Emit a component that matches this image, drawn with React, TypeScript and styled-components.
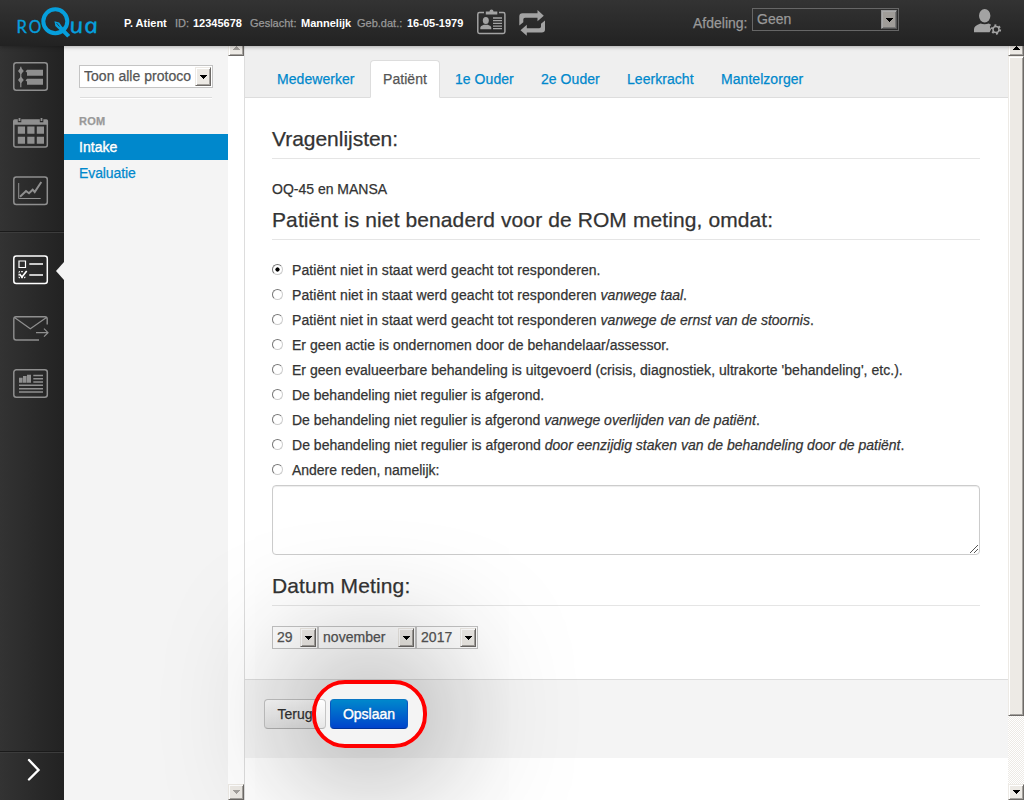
import React from 'react';
import styled, { createGlobalStyle, css } from 'styled-components';

const Global = createGlobalStyle`
  * { box-sizing: border-box; }
  html, body { margin: 0; padding: 0; overflow: hidden; }
  body {
    font: 14px/20px "Liberation Sans", Arial, sans-serif;
    color: #333;
    background: #fff;
    -webkit-text-stroke-width: 0.25px;
  }
  svg { display: block; flex: none; }
`;

const Page = styled.div`
  display: flex;
  flex-direction: column;
  width: 1024px;
  height: 800px;
  overflow: hidden;
`;

const Header = styled.header`
  position: relative;
  z-index: 2;
  flex: none;
  display: flex;
  align-items: center;
  height: 46px;
  background: linear-gradient(#333, #222);
  box-shadow: 0 1px 4px rgba(0, 0, 0, 0.3);
`;

const LogoLink = styled.a`
  width: 124px;
  padding-left: 16px;
`;

const Patient = styled.div`
  display: flex;
  width: 352px;
  font-size: 11px;
  color: #999;
  white-space: nowrap;
`;

const Fact = styled.span<{ $w: number }>`
  flex: none;
  width: ${(p) => p.$w}px;
`;

const Strong = styled(Fact)`
  font-weight: bold;
  color: #fff;
  -webkit-text-stroke-width: 0;
`;

const HeaderTools = styled.div`
  display: flex;
  width: 217px;
  gap: 11px;
  padding-bottom: 1px;
`;

const Department = styled.label`
  display: flex;
  width: 280px;
  padding-bottom: 5px;
  color: #999;
`;

const DepartmentLabel = styled.span`
  width: 59px;
  padding-top: 5px;
`;

const UserMenu = styled.a`
  padding-bottom: 2px;
`;

const Body = styled.div`
  flex: 1;
  display: flex;
  min-height: 0;
`;

const Rail = styled.nav`
  flex: none;
  display: flex;
  flex-direction: column;
  width: 64px;
  background: linear-gradient(90deg, #333, #222);
`;

const RailGroup = styled.div<{ $height: number; $top: number; $last?: boolean }>`
  height: ${(p) => p.$height}px;
  padding: ${(p) => p.$top}px 0 0 13px;
  ${(p) =>
    !p.$last &&
    css`
      border-bottom: 1px solid #1a1a1a;
      box-shadow: 0 1px 0 #3c3c3c;
    `}
`;

const RailItem = styled.a<{ $active?: boolean; $gap: number }>`
  position: relative;
  display: block;
  height: 32px;
  margin-bottom: ${(p) => p.$gap}px;
  color: ${(p) => (p.$active ? '#fff' : '#8f8f8f')};
  ${(p) =>
    p.$active &&
    css`
      &::after {
        content: '';
        position: absolute;
        right: 0;
        top: 9px;
        border: 9px solid transparent;
        border-left: 0;
        border-right: 8px solid #f4f4f4;
      }
    `}
`;

const Sidebar = styled.aside`
  flex: none;
  width: 164px;
  padding-top: 19px;
  background: #f4f4f4;
`;

const SidebarTop = styled.div`
  margin: 0 15px;
  height: 52px;
`;

const Rule = styled.div`
  height: 2px;
  margin: 9px 1px 0;
  background: #ddd;
  border-bottom: 1px solid #fff;
`;

const NavHeader = styled.div`
  height: 17px;
  padding: 0 15px;
  font-size: 11px;
  font-weight: bold;
  line-height: 8px;
  letter-spacing: 0.2px;
  color: #999;
`;

const NavItem = styled.a<{ $active?: boolean }>`
  display: block;
  height: 26px;
  padding: 0 15px;
  line-height: 26px;
  letter-spacing: -0.1px;
  color: ${(p) => (p.$active ? '#fff' : '#0088cc')};
  background: ${(p) => (p.$active ? '#0088cc' : 'transparent')};
  text-shadow: ${(p) => (p.$active ? '0 -1px 0 rgba(0,0,0,.2)' : '0 1px 0 rgba(255,255,255,.5)')};
  ${(p) => p.$active && '-webkit-text-stroke-width: 0.4px; letter-spacing: 0.05px;'}
`;

const Select = styled.div<{ $w: number; $dark?: boolean }>`
  display: flex;
  flex: none;
  width: ${(p) => p.$w}px;
  height: 23px;
  padding: 1px 1px 1px 4px;
  border: 1px solid ${(p) => (p.$dark ? '#666' : '#c4c4c4')};
  background: ${(p) => (p.$dark ? 'transparent' : '#fff')};
  color: ${(p) => (p.$dark ? '#999' : '#555')};
  line-height: 19px;
`;

const SelectValue = styled.span`
  flex: 1;
  margin-right: 4px;
  overflow: hidden;
  letter-spacing: 0.03px;
  white-space: nowrap;
`;

const Bevel = styled.span<{ $h: number; $dark?: boolean }>`
  flex: none;
  display: flex;
  align-items: center;
  justify-content: center;
  width: 16px;
  height: ${(p) => p.$h}px;
  background: ${(p) => (p.$dark ? '#a09d99' : '#edeae5')};
  border: 1px solid;
  border-color: ${(p) => (p.$dark ? '#999 #555 #555 #999' : '#edeae5 #6d6a67 #6d6a67 #edeae5')};
  box-shadow: ${(p) =>
    p.$dark
      ? 'inset 1px 1px 0 #aaa, inset -1px -1px 0 #777'
      : 'inset 1px 1px 0 #fff, inset -1px -1px 0 #a5a29e'};
`;

const SideScroll = styled.div`
  flex: none;
  display: flex;
  flex-direction: column;
  justify-content: space-between;
  width: 17px;
  background: #fff;
  border-right: 1px solid #ddd;
`;

const Clip = styled.div`
  display: flex;
  align-items: flex-end;
  height: 10px;
  overflow: hidden;
`;

const Main = styled.main`
  flex: 1;
  min-width: 0;
`;

const Tabs = styled.div`
  display: flex;
  gap: 2px;
  height: 52px;
  padding: 14px 0 0 19px;
  background: #efefef;
  border-bottom: 1px solid #ddd;
`;

const Tab = styled.a<{ $active?: boolean; $w: number }>`
  flex: none;
  width: ${(p) => p.$w}px;
  height: 38px;
  padding: 8px 0 0 12px;
  border: 1px solid transparent;
  border-radius: 4px 4px 0 0;
  color: #0088cc;
  letter-spacing: 0.05px;
  white-space: nowrap;
  ${(p) =>
    p.$active &&
    css`
      color: #555;
      background: #fff;
      border-color: #ddd #ddd #fff;
    `}
`;

const Form = styled.div`
  height: 581px;
  padding: 21px 28px 0 27px;
`;

const Legend = styled.h2<{ $mb: number; $ls?: number }>`
  margin: 0 0 ${(p) => p.$mb}px;
  height: 40px;
  font-size: 21px;
  font-weight: normal;
  line-height: 40px;
  letter-spacing: ${(p) => p.$ls || 0}px;
  border-bottom: 1px solid #e5e5e5;
`;

const Lists = styled.p`
  margin: 0;
  height: 21px;
  line-height: 20px;
`;

const Option = styled.label<{ $ls: number }>`
  display: flex;
  align-items: center;
  height: 25px;
  gap: 9px;
  letter-spacing: ${(p) => p.$ls}px;
  white-space: nowrap;

  i { letter-spacing: 0; }
`;

const Dot = styled.span<{ $on?: boolean }>`
  flex: none;
  width: 11px;
  height: 11px;
  border: 1px solid;
  border-color: #777 #ccc #ccc #777;
  border-radius: 50%;
  background: ${(p) =>
    p.$on ? 'radial-gradient(circle, #000 0 1.8px, #fff 2.4px)' : '#fff'};
`;

const AreaWrap = styled.div`
  position: relative;
  height: 70px;
  margin-top: 3px;
  margin-bottom: 11px;
`;

const Area = styled.textarea`
  display: block;
  width: 100%;
  height: 70px;
  resize: none;
  border: 1px solid #ccc;
  border-radius: 4px;
  background: #fff;
  box-shadow: inset 0 1px 1px rgba(0, 0, 0, 0.075);
`;

const Grip = styled.svg`
  position: absolute;
  right: 2px;
  bottom: 2px;
`;

const DateRow = styled.div`
  display: flex;
`;

const Footer = styled.div`
  display: flex;
  align-items: flex-start;
  gap: 4px;
  height: 79px;
  padding: 19px 0 0 19px;
  background: #f4f4f4;
  border-top: 1px solid #ddd;
`;

const Button = styled.button<{ $primary?: boolean; $w: number }>`
  width: ${(p) => p.$w}px;
  height: 30px;
  padding: 0;
  font: 14px/20px "Liberation Sans", Arial, sans-serif;
  border-radius: 4px;
  -webkit-text-stroke-width: ${(p) => (p.$primary ? 0.4 : 0.25)}px;
  ${(p) =>
    p.$primary
      ? css`
          color: #fff;
          text-shadow: 0 -1px 0 rgba(0, 0, 0, 0.25);
          background: linear-gradient(#0088cc, #0044cc);
          border: 1px solid;
          border-color: #0a76c4 #0a55c0 #003399;
        `
      : css`
          color: #333;
          text-shadow: 0 1px 1px rgba(255, 255, 255, 0.75);
          background: linear-gradient(#fff, #e6e6e6);
          border: 1px solid #c5c5c5;
          border-bottom-color: #b3b3b3;
        `}
`;

const Spot = styled.div`
  position: relative;
`;

const Ring = styled.div`
  position: absolute;
  z-index: 1;
  left: -18px;
  top: -19px;
  width: 115px;
  height: 68px;
  border: 4px solid #f00;
  border-radius: 33px;
  box-shadow: 0 0 140px rgba(0, 0, 0, 0.88);
  pointer-events: none;
`;

const MainScroll = styled.div`
  flex: none;
  display: flex;
  flex-direction: column;
  width: 16px;
  background: repeating-conic-gradient(#edeae5 0 25%, #fff 0 50%) 0 0 / 2px 2px;
`;

const Thumb = styled.div`
  height: 660px;
  margin-bottom: auto;
  background: #edeae5;
  border: 1px solid;
  border-color: #edeae5 #6d6a67 #6d6a67 #edeae5;
  box-shadow: inset 1px 1px 0 #fff, inset -1px -1px 0 #a5a29e;
`;

const Arrow = ({ up, color = '#000' }: { up?: boolean; color?: string }) => (
  <svg width="8" height="4" viewBox="0 0 8 4" shapeRendering="crispEdges">
    <path d={up ? 'M0 4h8L4 0z' : 'M0 0h8L4 4z'} fill={color} />
  </svg>
);

const Dropdown = ({ w, value, dark }: { w: number; value: string; dark?: boolean }) => (
  <Select $w={w} $dark={dark}>
    <SelectValue>{value}</SelectValue>
    <Bevel $h={19} $dark={dark}>
      <Arrow />
    </Bevel>
  </Select>
);

const Logo = () => (
  <svg width="84" height="34" viewBox="16 6 84 34" fill="none" stroke="#069fdc">
    <g fill="#069fdc" strokeWidth=".35">
      <text x="16.400" y="33" fontFamily="Lato, sans-serif" fontSize="16.500">R</text>
      <text x="28.700" y="33" fontFamily="Lato, sans-serif" fontSize="16.500" textLength="12.500" lengthAdjust="spacingAndGlyphs">O</text>
      <text transform="translate(70.600 33) skewX(12) scale(1.16 1)" fontFamily="Noto Sans, sans-serif" fontStyle="italic" fontSize="21" letterSpacing=".4">ua</text>
    </g>
    <path d="M54.500 21.300l4.700 1.300 2.600 3.700 8.400 8.600-3 2.700-8.700-8.600-3.200-3z" fill="#069fdc" stroke="none" />
    <circle cx="55.300" cy="21.300" r="12" strokeWidth="4" />
    <path d="M56.500 23l3 3.600" stroke="#2a2a2a" strokeWidth=".8" />
  </svg>
);

const IdCard = () => (
  <svg width="31" height="28" viewBox="476 9 31 28" fill="#a3a3a3">
    <path d="M484 12.500h-4.500q-1.700 0-1.700 1.700v17.600q0 1.700 1.700 1.700h23.700q1.700 0 1.700-1.700V14.200q0-1.700-1.700-1.700H499" fill="none" stroke="#a3a3a3" strokeWidth="1.500" />
    <path d="M485.800 11.500h3.700q0-2 2-2t2 2h3.800v2.900h-11.500z" />
    <ellipse cx="485.800" cy="20.500" rx="3" ry="3.600" />
    <path d="M480.300 29.300v-1.500q0-1.800 3.500-3h4q3.500 1.200 3.500 3v1.500z" />
    <path d="M493 18h9M493 20.700h9M493 23.400h9M493 26.100h9M493 28.700h9" stroke="#a3a3a3" strokeWidth="1.300" />
  </svg>
);

const Swap = () => (
  <svg width="28" height="28" viewBox="518 9 28 28" fill="#a3a3a3">
    <path d="M519.300 25.500v-9q0-3.200 3.200-3.200h15v-3.300l6.300 5.700-6.300 5.500v-3.500h-12.500q-1.700 0-1.700 1.700v2.800z" />
    <path d="M545 20.500v9q0 3-3.200 3h-15v3.300l-6.300-5.500 6.300-5.500v3.400h12.500q1.700 0 1.700-1.700v-2.700z" />
  </svg>
);

const UserGear = () => (
  <svg width="30" height="28" viewBox="973 8 30 28" fill="#a3a3a3">
    <ellipse cx="984.700" cy="15.800" rx="5.700" ry="6.700" />
    <path d="M974 32.300v-3q0-3.500 6.500-5.800 4 1.500 8.300 0l2.300 1.200-1.300 2 1.300 2.500-1.500 3.100z" />
    <circle cx="996" cy="29.500" r="3" fill="none" stroke="#a3a3a3" strokeWidth="1.500" />
    <circle cx="996" cy="29.500" r="4.200" fill="none" stroke="#a3a3a3" strokeWidth="1.900" strokeDasharray="2 2.400" />
  </svg>
);

const Glyph = ({ children }: { children: React.ReactNode }) => (
  <svg width="36" height="32" viewBox="0 0 36 32" fill="none" stroke="currentColor" strokeWidth="1.500">
    {children}
  </svg>
);

const Frame = ({ y }: { y: number }) => <rect x=".8" y={y} width="33.500" height="27.400" rx="2.500" />;

const Protocol = () => (
  <Glyph>
    <Frame y={2.8} />
    <path d="M7.800 6.700v20.600" strokeWidth="1.200" />
    <path d="M7.800 7.500l3 3.500-3 3.500L5 11zM7.800 16.500l3 3.500-3 3.500L5 20zM12.500 11.500l1.500-1.800h16v6H14v-3.200zM12.500 20.500l1.500-1.800h16v6H14v-3.200z" fill="currentColor" stroke="none" />
  </Glyph>
);

const Calendar = () => (
  <Glyph>
    <path d="M.8 7V28q0 2 2 2h29.500q2 0 2-2V7" />
    <path d="M0 7.800V4q0-1.700 1.800-1.700h3v2.900h3.500V2.300h18.500v2.900h3.500V2.300h3q1.800 0 1.800 1.700v3.800z" fill="currentColor" stroke="none" />
    <path d="M6.500 1v3M28.500 1v3" strokeWidth="1.800" />
    <path d="M4.800 9.500h7.200v7.200H4.800zM14.300 9.500h7.200v7.200h-7.200zM23.800 9.500H31v7.200h-7.200zM4.800 19.700h7.200v7H4.800zM14.300 19.700h7.200v7h-7.200zM23.800 19.700H31v7h-7.200z" fill="currentColor" stroke="none" />
  </Glyph>
);

const Chart = () => (
  <Glyph>
    <Frame y={3} />
    <path d="M5.700 9v15.500h22" strokeWidth="1" />
    <path d="M7 22.700L13 17l3 2.300 3.700-3.600 2 2.300L28.300 8" strokeWidth="2" />
  </Glyph>
);

const Checklist = () => (
  <Glyph>
    <Frame y={3} />
    <path d="M6 8h6.500v6.500H6z" strokeWidth="1.200" />
    <path d="M16.300 11H30M16.300 22H30" strokeWidth="1.500" />
    <path d="M10 18.700H6v6h6v-2" strokeWidth="1" strokeDasharray="2 1" />
    <path d="M6.500 21l2.500 3 4.700-6" strokeWidth="1.700" />
  </Glyph>
);

const Mail = () => (
  <Glyph>
    <path d="M34.200 12.500V7q0-2.300-2.300-2.300H3Q.8 4.700.8 7v18.500q0 2.500 2.300 2.500H26" strokeWidth="1.400" />
    <path d="M1.500 5.500l15.800 11.300L33.500 5.500M23 20.700h11.500M31 16.700l4 4-4 4" strokeWidth="1.200" />
  </Glyph>
);

const News = () => (
  <Glyph>
    <Frame y={1.8} />
    <path d="M6 14.700V9.700h3.600V14.700zM10 14.700V8h3.600v6.700zM14 14.700v-8h4v8z" fill="currentColor" stroke="none" />
    <path d="M20.300 7.400H30M20.300 10.700H30M20.300 13.900H30M6 17.300h24M6 20.700h24M6 24h24" strokeWidth="1.500" />
  </Glyph>
);

const reasons: { text: React.ReactNode; ls: number }[] = [
  { text: 'Patiënt niet in staat werd geacht tot responderen.', ls: 0.07 },
  { text: <>Patiënt niet in staat werd geacht tot responderen <i>vanwege taal</i>.</>, ls: 0.07 },
  { text: <>Patiënt niet in staat werd geacht tot responderen <i>vanwege de ernst van de stoornis</i>.</>, ls: 0.07 },
  { text: 'Er geen actie is ondernomen door de behandelaar/assessor.', ls: 0.035 },
  { text: "Er geen evalueerbare behandeling is uitgevoerd (crisis, diagnostiek, ultrakorte 'behandeling', etc.).", ls: 0.03 },
  { text: 'De behandeling niet regulier is afgerond.', ls: 0 },
  { text: <>De behandeling niet regulier is afgerond <i>vanwege overlijden van de patiënt</i>.</>, ls: 0 },
  { text: <>De behandeling niet regulier is afgerond <i>door eenzijdig staken van de behandeling door de patiënt</i>.</>, ls: 0.015 },
  { text: 'Andere reden, namelijk:', ls: -0.02 },
];

const tabs: [string, number][] = [
  ['Medewerker', 104],
  ['Patiënt', 70],
  ['1e Ouder', 84],
  ['2e Ouder', 84],
  ['Leerkracht', 92],
  ['Mantelzorger', 108],
];

export default function App() {
  return (
    <>
      <Global />
      <Page>
        <Header>
          <LogoLink><Logo /></LogoLink>
          <Patient>
            <Strong $w={51}>P. Atient</Strong>
            <Fact $w={18}>ID:</Fact>
            <Strong $w={57}>12345678</Strong>
            <Fact $w={51}>Geslacht:</Fact>
            <Strong $w={56}>Mannelijk</Strong>
            <Fact $w={50}>Geb.dat.:</Fact>
            <Strong $w={69}>16-05-1979</Strong>
          </Patient>
          <HeaderTools>
            <IdCard />
            <Swap />
          </HeaderTools>
          <Department>
            <DepartmentLabel>Afdeling:</DepartmentLabel>
            <Dropdown w={147} value="Geen" dark />
          </Department>
          <UserMenu><UserGear /></UserMenu>
        </Header>
        <Body>
          <Rail>
            <RailGroup $height={186} $top={14}>
              <RailItem $gap={25}><Protocol /></RailItem>
              <RailItem $gap={25}><Calendar /></RailItem>
              <RailItem $gap={0}><Chart /></RailItem>
            </RailGroup>
            <RailGroup $height={520} $top={21}>
              <RailItem $gap={27} $active><Checklist /></RailItem>
              <RailItem $gap={24}><Mail /></RailItem>
              <RailItem $gap={0}><News /></RailItem>
            </RailGroup>
            <RailGroup $height={48} $top={6} $last>
              <svg width="36" height="24" viewBox="0 0 36 24" fill="none" stroke="#fff" strokeWidth="2.400" strokeLinecap="round">
                <path d="M16 2L25.500 12 16 21.500" />
              </svg>
            </RailGroup>
          </Rail>
          <Sidebar>
            <SidebarTop>
              <Dropdown w={134} value="Toon alle protocollen" />
              <Rule />
            </SidebarTop>
            <NavHeader>ROM</NavHeader>
            <NavItem $active>Intake</NavItem>
            <NavItem>Evaluatie</NavItem>
          </Sidebar>
          <SideScroll>
            <Clip><Bevel $h={16}><Arrow up color="#a5a29e" /></Bevel></Clip>
            <Bevel $h={16}><Arrow color="#a5a29e" /></Bevel>
          </SideScroll>
          <Main>
            <Tabs>
              {tabs.map(([label, w], i) => (
                <Tab key={label} $w={w} $active={i === 1}>{label}</Tab>
              ))}
            </Tabs>
            <Form>
              <Legend $mb={20} $ls={-0.03}>Vragenlijsten:</Legend>
              <Lists>OQ-45 en MANSA</Lists>
              <Legend $mb={17} $ls={0.1}>Patiënt is niet benaderd voor de ROM meting, omdat:</Legend>
              {reasons.map(({ text, ls }, i) => (
                <Option key={i} $ls={ls}>
                  <Dot $on={i === 0} />
                  <span>{text}</span>
                </Option>
              ))}
              <AreaWrap>
                <Area />
                <Grip width="8" height="8" viewBox="0 0 8 8" stroke="#555" strokeWidth="1">
                  <path d="M0 8L8 0M4 8l4-4" />
                </Grip>
              </AreaWrap>
              <Legend $mb={20} $ls={0.14}>Datum Meting:</Legend>
              <DateRow>
                <Dropdown w={46} value="29" />
                <Dropdown w={98} value="november" />
                <Dropdown w={62} value="2017" />
              </DateRow>
            </Form>
            <Footer>
              <Button $w={62}>Terug</Button>
              <Spot>
                <Ring />
                <Button $primary $w={78}>Opslaan</Button>
              </Spot>
            </Footer>
          </Main>
          <MainScroll>
            <Clip><Bevel $h={16}><Arrow up /></Bevel></Clip>
            <Thumb />
            <Bevel $h={16}><Arrow /></Bevel>
          </MainScroll>
        </Body>
      </Page>
    </>
  );
}
